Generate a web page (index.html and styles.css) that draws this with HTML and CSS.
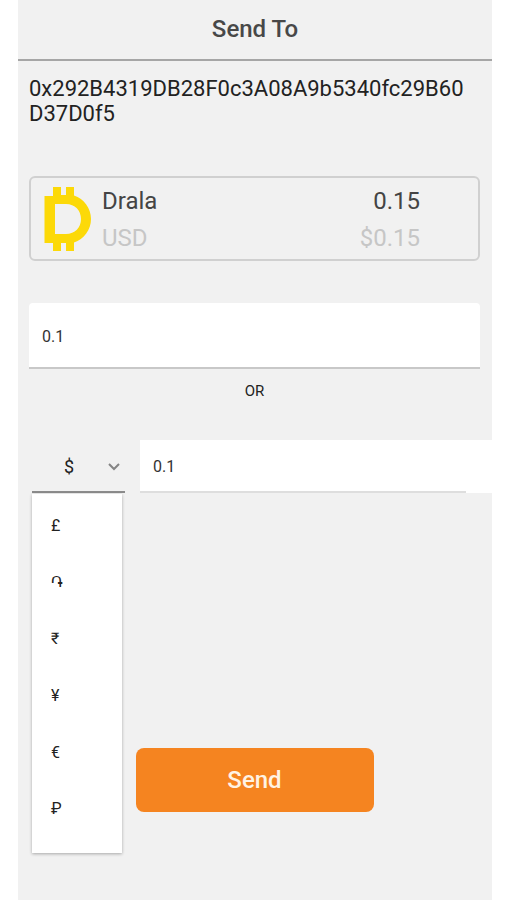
FILE: index.html
```html
<!DOCTYPE html>
<html lang="en">
<head>
<meta charset="utf-8">
<meta name="viewport" content="width=device-width, initial-scale=1">
<title>Send To</title>
<link rel="stylesheet" href="styles.css">
</head>
<body>
<main class="screen">
  <header class="header"><h1 class="title">Send To</h1></header>
  <form class="form">
    <p class="address">0x292B4319DB28F0c3A08A9b5340fc29B60D37D0f5</p>
    <section class="wallet">
      <svg class="coin" viewBox="0 0 48 66" aria-hidden="true">
        <path fill="#fcd908" fill-rule="evenodd" d="M10 0h8v8h5V0h8v8.500c10 3.500 17 12.500 17 23.500s-7 20-17 23.500v8.500h-8v-8h-5v8h-8v-8H1.500V9H10zM12 17v30h11c9 0 15-6.500 15-15s-6-15-15-15z"/>
      </svg>
      <div class="lines">
        <div class="line"><span>Drala</span><span>0.15</span></div>
        <div class="line muted"><span>USD</span><span>$0.15</span></div>
      </div>
    </section>
    <input class="field amount" type="text" value="0.1" aria-label="Token amount">
    <p class="or">OR</p>
    <div class="fiat">
      <div class="picker">
        <select class="currency" aria-label="Currency">
          <option>$</option><option>£</option><option>֏</option><option>₹</option><option>¥</option><option>€</option><option>₽</option>
        </select>
        <svg class="chevron" viewBox="0 0 12 8" aria-hidden="true"><path d="M1 1l5 5 5-5" fill="none" stroke="#858585" stroke-width="2"/></svg>
        <ul class="menu">
          <li>£</li><li>֏</li><li>₹</li><li>¥</li><li>€</li><li>₽</li>
        </ul>
      </div>
      <div class="converted"><input class="field" type="text" value="0.1" aria-label="Currency amount"></div>
    </div>
    <button class="send" type="button">Send</button>
  </form>
</main>
</body>
</html>
```
FILE: styles.css
```css
* {
  box-sizing: border-box;
}

body {
  margin: 0;
  background: #fff;
  color: #222;
  font-family: Roboto, "Noto Sans", "DejaVu Sans", sans-serif;
}

.screen {
  min-height: 100vh;
  margin: 0 15px 0 18px;
  background: #f1f1f1;
}

.header {
  padding: 14px 0 15px;
  border-bottom: 2px solid #a6a6a6;
}

.title {
  margin: 0;
  color: #484848;
  font-size: 24px;
  font-weight: 500;
  line-height: 30px;
  text-align: center;
}

.form {
  display: flex;
  flex-direction: column;
  padding: 15px 12px 0 11px;
}

.address {
  margin: 0;
  padding-right: 8px;
  font-size: 22px;
  line-height: 25px;
  overflow-wrap: anywhere;
}

.wallet {
  display: flex;
  align-items: center;
  gap: 11px;
  margin-top: 50px;
  padding: 5px 58px 2px 12px;
  border: 2px solid #d0d0d0;
  border-radius: 6px;
}

.coin {
  width: 48px;
  height: 66px;
}

.lines {
  flex: 1;
}

.line {
  display: flex;
  justify-content: space-between;
  color: #444;
  font-size: 24px;
  line-height: 37px;
}

.muted {
  color: #c6c6c6;
}

.field {
  display: block;
  width: 100%;
  border: 0;
  border-bottom: 2px solid #c8c8c8;
  border-radius: 0;
  outline: 0;
  background: #fff;
  color: #333;
  font: 16px Roboto, sans-serif;
}

.amount {
  height: 66px;
  margin-top: 42px;
  padding: 2px 13px 0;
  border-radius: 4px 4px 0 0;
}

.or {
  margin: 12px 0 0;
  font-size: 15px;
  line-height: 20px;
  text-align: center;
}

.fiat {
  display: flex;
  gap: 15px;
  margin: 39px -12px 0 3px;
}

.picker {
  position: relative;
  width: 93px;
}

.currency {
  display: block;
  width: 100%;
  height: 53px;
  padding: 2px 32px 0;
  appearance: none;
  border: 0;
  border-bottom: 2px solid #8b8b8b;
  border-radius: 0;
  background: transparent;
  color: #222;
  font: 18px Roboto, sans-serif;
}

.chevron {
  position: absolute;
  top: 23px;
  right: 5px;
  width: 12px;
  height: 8px;
  pointer-events: none;
}

.menu {
  position: absolute;
  top: 54px;
  left: 0;
  display: flex;
  flex-direction: column;
  width: 90px;
  height: 359px;
  margin: 0;
  padding: 3px 0 16px;
  background: #fff;
  box-shadow: 0 1px 3px rgba(0, 0, 0, 0.3);
  list-style: none;
}

.menu li {
  display: flex;
  flex: 1;
  align-items: center;
  padding-left: 19px;
  font-size: 16px;
}

.converted {
  flex: 1;
  padding-right: 26px;
  background: #fff;
}

.converted .field {
  height: 53px;
  padding: 2px 13px 0;
  border-bottom-color: #dedede;
}

.send {
  align-self: center;
  width: 238px;
  height: 64px;
  margin-top: 255px;
  border: 0;
  border-radius: 8px;
  background: #f58420;
  color: #fff3e4;
  font: 500 24px Roboto, sans-serif;
}
```
